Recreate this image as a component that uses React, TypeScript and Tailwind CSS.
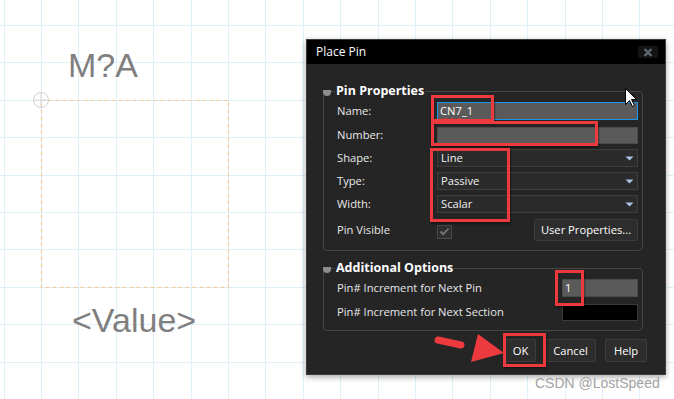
import React from "react";

const GRID = 37.4;

function Grid() {
  const xs: number[] = [];
  const ys: number[] = [];
  for (let x = 41 - GRID; x < 680; x += GRID) xs.push(x);
  for (let y = 25 - GRID; y < 405; y += GRID) ys.push(y);
  return (
    <svg className="absolute inset-0" width={674} height={399}>
      {xs.map((x, i) => (
        <line key={"x" + i} x1={Math.round(x) + 0.5} y1={0} x2={Math.round(x) + 0.5} y2={399} stroke="#dff0f9" strokeWidth={1} />
      ))}
      {ys.map((y, i) => (
        <line key={"y" + i} x1={0} y1={Math.round(y) + 0.5} x2={674} y2={Math.round(y) + 0.5} stroke="#dff0f9" strokeWidth={1} />
      ))}
      <rect x={41.5} y={100.5} width={187} height={187} fill="none" stroke="#efcc98" strokeWidth={1.2} strokeDasharray="4 3" />
      <circle cx={41} cy={100} r={7.5} fill="none" stroke="#cfcfcf" strokeWidth={1} />
      <line x1={33} y1={100} x2={49} y2={100} stroke="#d8d8d8" strokeWidth={1} />
      <line x1={41} y1={92} x2={41} y2={108} stroke="#d8d8d8" strokeWidth={1} />
    </svg>
  );
}

function Chevron() {
  return (
    <svg width="9" height="5" viewBox="0 0 9 5" className="shrink-0">
      <path d="M0.5 0.5 L8.5 0.5 L4.5 4.5 Z" fill="#a9c3e4" />
    </svg>
  );
}

function Select({ value }: { value: string }) {
  return (
    <div className="h-[18px] flex-1 flex items-center justify-between bg-[#2b2b2b] border border-[#3f3f3f] pl-[3px] pr-[3px] text-[#f0f0f0]">
      <span>{value}</span>
      <Chevron />
    </div>
  );
}

function Row({ label, className, children }: { label: string; className?: string; children: React.ReactNode }) {
  return (
    <div className={"flex items-center h-[18px] " + (className ?? "")}>
      <div className="w-[100px] shrink-0 text-[#e8e8e8]">{label}</div>
      {children}
    </div>
  );
}

function GroupTitle({ text }: { text: string }) {
  return (
    <>
      <div className="absolute -left-[1px] -top-[2px] w-[8px] h-[6px] rounded-b-[4px] bg-[#8d8d8d]" />
      <div className="absolute left-[11px] -top-[10px] px-[1px] bg-[#252526] font-bold text-[12.5px] text-white leading-[18px]">
        {text}
      </div>
    </>
  );
}

function RedBox({ l, t, w, h }: { l: number; t: number; w: number; h: number }) {
  return (
    <div
      className="absolute border-[3px] border-[#ec3a3e] shadow-[1px_2px_2px_rgba(0,0,0,0.4)]"
      style={{ left: l, top: t, width: w, height: h }}
    />
  );
}

export default function App() {
  return (
    <div className="relative w-[674px] h-[399px] overflow-hidden bg-white font-['Liberation_Sans',Arial,sans-serif]">
      <Grid />
      <div className="absolute left-[68px] top-[48px] text-[34px] leading-none text-[#7f7f7f]">M?A</div>
      <div className="absolute left-[72px] top-[303px] text-[34px] leading-none text-[#7f7f7f]">&lt;Value&gt;</div>

      {/* Dialog */}
      <div className="absolute left-[306px] top-[39px] w-[360px] h-[336px] flex flex-col bg-[#252526] border border-[#3c3c3c] shadow-[0_2px_6px_rgba(0,0,0,0.35)] font-['Open_Sans','Noto_Sans',sans-serif] text-[11.2px] leading-none">
        <div className="h-[24px] shrink-0 bg-black flex items-center justify-between pl-[9px] pr-[7px]">
          <span className="text-white text-[12px]">Place Pin</span>
          <div className="w-[20px] h-[12px] bg-[#141414] flex items-center justify-center">
            <svg width="10" height="9" viewBox="0 0 10 9">
              <path d="M1.5 1 L8.5 8 M8.5 1 L1.5 8" stroke="#5d6874" strokeWidth="2.4" />
            </svg>
          </div>
        </div>

        <div className="flex flex-col pl-[16px] pr-[22px] pt-[27px]">
          {/* Pin Properties */}
          <div className="relative border border-[#464646] rounded-[4px] pt-[10px] pl-[13px] pr-[4px] pb-[9px] flex flex-col">
            <GroupTitle text="Pin Properties" />
            <Row label="Name:">
              <div className="h-[18px] flex-1 flex items-center bg-[#5a5a5a] border border-[#1e94ea] pl-[2px] text-white">
                <span className="underline decoration-wavy decoration-[#e0393b] decoration-1 underline-offset-2">CN7</span>
                <span>_1</span>
              </div>
            </Row>
            <Row label="Number:" className="mt-[6px]">
              <div className="h-[17px] flex-1 bg-[#5a5a5a] border border-[#4b4b4b]" />
            </Row>
            <Row label="Shape:" className="mt-[5px]">
              <Select value="Line" />
            </Row>
            <Row label="Type:" className="mt-[5px]">
              <Select value="Passive" />
            </Row>
            <Row label="Width:" className="mt-[5px]">
              <Select value="Scalar" />
            </Row>
            <div className="flex items-center h-[22px] mt-[6px]">
              <div className="w-[100px] shrink-0 text-[#e8e8e8]">Pin Visible</div>
              <div className="w-[15px] h-[14px] mt-[3px] bg-[#2e2e2e] border border-[#4a4a4a] flex items-center justify-center">
                <svg width="11" height="9" viewBox="0 0 11 9">
                  <path d="M1.5 4.5 L4.2 7.2 L9.5 1.5" fill="none" stroke="#777" strokeWidth="1.8" />
                </svg>
              </div>
              <div className="flex-1" />
              <div className="h-[22px] w-[104px] flex items-center justify-center bg-[#2d2d2d] border border-[#3c3c3c] rounded-[2px] text-white">
                User Properties...
              </div>
            </div>
          </div>

          {/* Additional Options */}
          <div className="relative mt-[17px] border border-[#464646] rounded-[4px] pt-[10px] pl-[13px] pr-[4px] pb-[9px] flex flex-col">
            <GroupTitle text="Additional Options" />
            <div className="flex items-center h-[18px]">
              <div className="flex-1 text-[#e8e8e8]">Pin# Increment for Next Pin</div>
              <div className="w-[76px] h-[18px] flex items-center bg-[#5a5a5a] border border-[#4b4b4b] pl-[2px] text-white">1</div>
            </div>
            <div className="flex items-center h-[18px] mt-[6px]">
              <div className="flex-1 text-[#e8e8e8]">Pin# Increment for Next Section</div>
              <div className="w-[76px] h-[17px] bg-black border border-[#3a3a3a]" />
            </div>
          </div>

          {/* Buttons */}
          <div className="flex justify-end gap-[9px] mt-[8px] -mr-[4px]">
            <div className="h-[23px] w-[31px] flex items-center justify-center bg-[#2d2d2d] border border-[#3c3c3c] rounded-[2px] text-white">OK</div>
            <div className="h-[23px] w-[51px] flex items-center justify-center bg-[#2d2d2d] border border-[#3c3c3c] rounded-[2px] text-white">Cancel</div>
            <div className="h-[23px] w-[42px] flex items-center justify-center bg-[#2d2d2d] border border-[#3c3c3c] rounded-[2px] text-white">Help</div>
          </div>
        </div>
      </div>

      {/* Annotations */}
      <RedBox l={431} t={95} w={63} h={27} />
      <RedBox l={431} t={121} w={167} h={25} />
      <RedBox l={430} t={148} w={80} h={74} />
      <RedBox l={555} t={270} w={29} h={36} />
      <RedBox l={503} t={333} w={43} h={34} />

      <svg className="absolute left-0 top-0" width={674} height={399} pointerEvents="none">
        <line x1={438} y1={340} x2={461} y2={345} stroke="#ec3a3e" strokeWidth={7} strokeLinecap="round" />
        <polygon points="478,334 504,353 471,362" fill="#ec3a3e" />
        <polygon
          points="625.5,88.5 625.5,104.5 629.5,100.5 632.5,106.5 634.5,105.5 631.5,99.5 636.5,99.5"
          fill="white"
          stroke="black"
          strokeWidth={1}
        />
      </svg>

      <div className="absolute left-[535px] top-[376px] text-[14px] leading-none text-[#a3a3a3] font-['Liberation_Sans',Arial,sans-serif]">
        CSDN @LostSpeed
      </div>
    </div>
  );
}
